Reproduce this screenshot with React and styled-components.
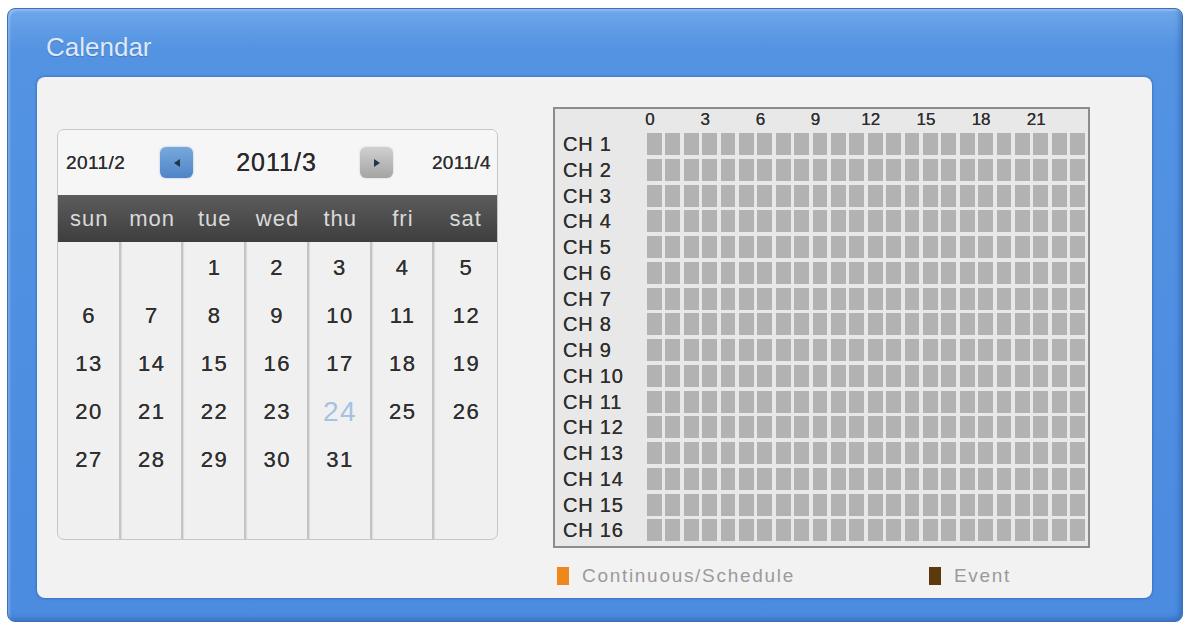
import React from "react"
import styled, { createGlobalStyle } from "styled-components"

const GlobalStyle = createGlobalStyle`
  body {
    margin: 0;
    background: #ffffff;
    font-family: "Liberation Sans", Arial, sans-serif;
  }
`

const Frame = styled.div`
  box-sizing: border-box;
  margin: 8px 0 0 7px;
  width: 1176px;
  height: 614px;
  border: 1px solid #3c70bd;
  border-radius: 8px;
  background: linear-gradient(#6ea6ea 0px, #5393e2 40px, #4b8be0 100%);
  box-shadow: inset -3px -3px 4px rgba(30, 70, 140, 0.35), inset 2px 2px 2px rgba(255, 255, 255, 0.25);
  padding: 0 30px 23px 29px;
  display: flex;
  flex-direction: column;
`

const Title = styled.h1`
  margin: 0;
  height: 68px;
  padding: 23px 0 0 9px;
  box-sizing: border-box;
  font-size: 26px;
  font-weight: normal;
  color: #dfe9f6;
  text-shadow: 0 1px 1px rgba(40, 80, 150, 0.4);
`

const Panel = styled.div`
  flex: 1;
  background: #f2f2f2;
  border-radius: 8px;
  box-shadow: 0 0 3px rgba(20, 50, 110, 0.55);
  display: flex;
  align-items: flex-start;
  padding: 30px 0 0 20px;
  gap: 55px;
`

/* ---------- month calendar ---------- */

const Cal = styled.div`
  margin-top: 22px;
  width: 441px;
  height: 411px;
  box-sizing: border-box;
  border: 1px solid #c6c6c6;
  border-radius: 7px;
  overflow: hidden;
  display: flex;
  flex-direction: column;
  background: #f0f0f0;
`

const Nav = styled.div`
  height: 65px;
  background: #f6f6f6;
  display: flex;
  align-items: center;
  padding: 0 6px 0 8px;
  color: #2e2e2e;
`

const SideMonth = styled.span`
  font-size: 19px;
  letter-spacing: 0.4px;
  width: 60px;
  text-align: ${({ right }) => (right ? "right" : "left")};
  text-shadow: 0 0 0.4px #2e2e2e;
`

const Arrow = styled.button`
  width: 33px;
  height: 31px;
  border: none;
  border-radius: 6px;
  padding: 0;
  display: flex;
  align-items: center;
  justify-content: center;
  background: ${({ active }) =>
    active ? "linear-gradient(#78a8dc, #4f84c6)" : "linear-gradient(#d0d0d0, #a4a4a4)"};
  box-shadow: 0 0 2px ${({ active }) => (active ? "rgba(80,140,220,0.6)" : "rgba(0,0,0,0.2)")};
  margin: ${({ active }) => (active ? "0 0 0 34px" : "0 38px 0 0")};
`

const MonthTitle = styled.span`
  flex: 1;
  text-align: center;
  font-size: 25px;
  letter-spacing: 1px;
  color: #2a2a2a;
  text-shadow: 0 0 0.4px #2a2a2a;
`

const DayBar = styled.div`
  height: 47px;
  background: linear-gradient(#5c5c5c, #3e3e3e);
  display: grid;
  grid-template-columns: repeat(7, 1fr);
  align-items: center;
`

const DayName = styled.span`
  text-align: center;
  font-size: 22px;
  letter-spacing: 1px;
  color: #dadada;
`

const Weeks = styled.div`
  flex: 1;
  display: grid;
  grid-template-columns: repeat(7, 1fr);
`

const Column = styled.div`
  display: flex;
  flex-direction: column;
  padding-top: 2px;
  border-right: ${({ last }) => (last ? "none" : "2px solid #c4c4c4")};
  box-shadow: ${({ last }) => (last ? "none" : "1px 0 1px rgba(0,0,0,0.08)")};
`

const Date = styled.span`
  height: 48px;
  display: flex;
  align-items: center;
  justify-content: center;
  font-size: ${({ today }) => (today ? "28px" : "22px")};
  color: ${({ today }) => (today ? "#a4c3e2" : "#2f2f2f")};
  text-shadow: ${({ today }) => (today ? "none" : "0 0 0.4px #2f2f2f")};
  letter-spacing: 1.5px;
  text-indent: 1.5px;
`

/* ---------- channel timeline ---------- */

const Side = styled.div`
  display: flex;
  flex-direction: column;
`

const Timeline = styled.div`
  width: 537px;
  height: 441px;
  box-sizing: border-box;
  border: 2px solid #8c8c8c;
  background: #e8e8e8;
  padding: 0 3px 1px 0;
  display: flex;
  flex-direction: column;
`

const Row = styled.div`
  display: flex;
  height: ${({ head }) => (head ? "24px" : "26px")};
`

const ChLabel = styled.span`
  width: 92px;
  box-sizing: border-box;
  padding: 0 0 0 8px;
  font-size: 20px;
  letter-spacing: 0.8px;
  color: #2e2e2e;
  text-shadow: 0 0 0.4px #2e2e2e;
  line-height: 22px;
`

const Hours = styled.div`
  flex: 1;
  display: grid;
  grid-template-columns: repeat(24, 1fr);
  column-gap: 3.5px;
  height: ${({ head }) => (head ? "24px" : "22px")};
`

const HourLabel = styled.span`
  grid-column: ${({ col }) => `${col} / span 3`};
  width: 26px;
  margin-left: -10px;
  text-align: center;
  font-size: 17px;
  line-height: 22px;
  color: #2e2e2e;
  text-shadow: 0 0 0.4px #2e2e2e;
`

const Slot = styled.span`
  background: #b2b2b2;
`

const Legend = styled.div`
  display: flex;
  align-items: center;
  padding: 17px 0 0 4px;
`

const Key = styled.span`
  display: flex;
  align-items: center;
  gap: 13px;
  width: ${({ wide }) => (wide ? "372px" : "auto")};
  font-size: 19px;
  letter-spacing: 1.7px;
  color: #9a9a9a;
`

const Swatch = styled.span`
  width: 12px;
  height: 18px;
  background: ${({ color }) => color};
`

const days = ["sun", "mon", "tue", "wed", "thu", "fri", "sat"]
const hours = [0, 3, 6, 9, 12, 15, 18, 21]
const channels = Array.from({ length: 16 }, (_, i) => i + 1)

// March 2011 starts on a Tuesday
const firstDay = 2
const monthLength = 31
const today = 24

const columnDates = col => {
  const out = []
  for (let w = 0; w < 5; w++) {
    const d = w * 7 + col - firstDay + 1
    out.push(d >= 1 && d <= monthLength ? d : "")
  }
  return out
}

const Triangle = ({ dir }) => (
  <svg width="8" height="10" viewBox="0 0 8 10">
    <path d={dir === "left" ? "M7 1 L1 5 L7 9 Z" : "M1 1 L7 5 L1 9 Z"} fill="#1f3550" />
  </svg>
)

const App = () => (
  <>
    <GlobalStyle />
    <Frame>
      <Title>Calendar</Title>
      <Panel>
        <Cal>
          <Nav>
            <SideMonth>2011/2</SideMonth>
            <Arrow active aria-label="Previous month">
              <Triangle dir="left" />
            </Arrow>
            <MonthTitle>2011/3</MonthTitle>
            <Arrow aria-label="Next month">
              <Triangle dir="right" />
            </Arrow>
            <SideMonth right>2011/4</SideMonth>
          </Nav>
          <DayBar>
            {days.map(d => (
              <DayName key={d}>{d}</DayName>
            ))}
          </DayBar>
          <Weeks>
            {days.map((d, col) => (
              <Column key={d} last={col === 6}>
                {columnDates(col).map((n, i) => (
                  <Date key={i} today={n === today}>{n}</Date>
                ))}
              </Column>
            ))}
          </Weeks>
        </Cal>
        <Side>
          <Timeline>
            <Row head>
              <ChLabel />
              <Hours head>
                {hours.map((h, i) => (
                  <HourLabel key={h} col={i * 3 + 1}>{h}</HourLabel>
                ))}
              </Hours>
            </Row>
            {channels.map(ch => (
              <Row key={ch}>
                <ChLabel>CH {ch}</ChLabel>
                <Hours>
                  {Array.from({ length: 24 }, (_, h) => (
                    <Slot key={h} />
                  ))}
                </Hours>
              </Row>
            ))}
          </Timeline>
          <Legend>
            <Key wide>
              <Swatch color="#f0871c" />
              Continuous/Schedule
            </Key>
            <Key>
              <Swatch color="#5c3a0e" />
              Event
            </Key>
          </Legend>
        </Side>
      </Panel>
    </Frame>
  </>
)

export default App
